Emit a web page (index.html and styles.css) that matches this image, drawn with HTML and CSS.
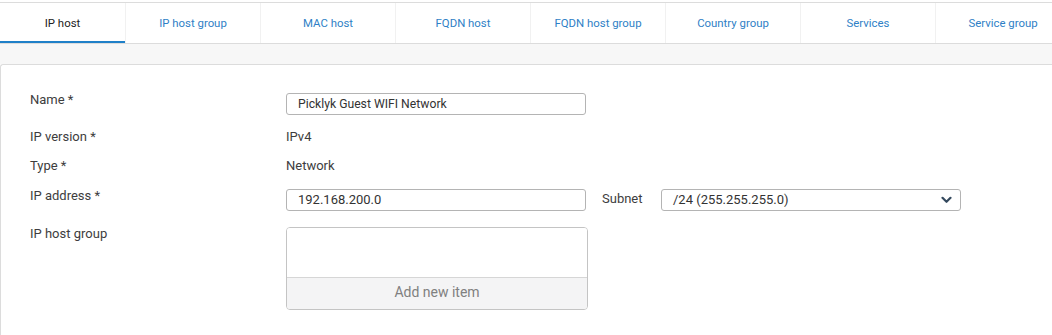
FILE: index.html
```html
<!DOCTYPE html>
<html>
<head>
<meta charset="utf-8">
<link rel="stylesheet" href="styles.css">
</head>
<body>
<div class="tabbar">
  <div class="tab tab-first active">IP host</div>
  <div class="tab">IP host group</div>
  <div class="tab">MAC host</div>
  <div class="tab">FQDN host</div>
  <div class="tab">FQDN host group</div>
  <div class="tab">Country group</div>
  <div class="tab">Services</div>
  <div class="tab">Service group</div>
</div>
<div class="strip"></div>
<div class="panel">
  <div class="row row-name">
    <div class="label">Name *</div>
    <div class="input input-name">Picklyk Guest WIFI Network</div>
  </div>
  <div class="row row-text">
    <div class="label">IP version *</div>
    <div class="value">IPv4</div>
  </div>
  <div class="row row-text row-type">
    <div class="label">Type *</div>
    <div class="value">Network</div>
  </div>
  <div class="row row-ip">
    <div class="label">IP address *</div>
    <div class="input">192.168.200.0</div>
    <div class="sublabel">Subnet</div>
    <div class="select">
      <span>/24 (255.255.255.0)</span>
      <svg class="chev" width="11" height="8" viewBox="0 0 11 8"><path d="M1.5 1.8 L5.5 5.8 L9.5 1.8" fill="none" stroke="#34495e" stroke-width="2.2" stroke-linecap="round" stroke-linejoin="round"/></svg>
    </div>
  </div>
  <div class="row row-group">
    <div class="label">IP host group</div>
    <div class="listbox">
      <div class="list-area"></div>
      <div class="add-item">Add new item</div>
    </div>
  </div>
</div>
</body>
</html>
```
FILE: styles.css
```css
html, body {
  margin: 0;
  padding: 0;
  background: #ffffff;
  font-family: Roboto, "Liberation Sans", Arial, sans-serif;
  color: #333;
}
body {
  padding-top: 2px;
  width: 1052px;
  height: 333px;
  overflow: hidden;
}
.tabbar {
  display: flex;
  border-top: 1px solid #dcdcdc;
  border-bottom: 1px solid #dcdcdc;
  height: 40px;
  background: #fff;
}
.tab {
  width: 135px;
  flex: none;
  box-sizing: border-box;
  border-left: 1px solid #f1f1f1;
  display: flex;
  align-items: center;
  justify-content: center;
  font-size: 11.4px;
  color: #2f7fc6;
}
.tab-first {
  width: 125px;
  border-left: none;
}
.tab.active {
  color: #222;
  border-bottom: 2px solid #1f80c8;
  padding-top: 2px;
}
.strip {
  height: 20px;
  background: #f7f7f7;
}
.panel {
  box-sizing: border-box;
  border-top: 1px solid #dcdcdc;
  border-left: 1px solid #dcdcdc;
  border-top-left-radius: 3px;
  background: #fff;
  padding: 28px 0 0 29px;
  height: 271px;
}
.row {
  display: flex;
  align-items: flex-start;
}
.label {
  width: 256px;
  flex: none;
  font-size: 13px;
  line-height: 16px;
  color: #3d3d3d;
  margin-top: -1px;
}
.value {
  font-size: 13px;
  line-height: 16px;
  color: #3d3d3d;
  margin-top: -1px;
}
.row-name { margin-bottom: 15px; }
.row-text { height: 16px; margin-bottom: 13px; }
.row-type { margin-bottom: 14px; }
.row-ip { margin-bottom: 16px; }
.row-ip .label { margin-top: -1px; }
.input, .select {
  box-sizing: border-box;
  width: 300px;
  height: 22px;
  border: 1px solid #b4b4b4;
  border-radius: 3px;
  font-size: 13px;
  line-height: 20px;
  padding: 0 11px;
  color: #333;
  background: #fff;
}
.input-name {
  font-size: 12.2px;
}
.sublabel {
  font-size: 13px;
  line-height: 16px;
  color: #3d3d3d;
  margin: 2px 0 0 16px;
  width: 59px;
}
.select {
  display: flex;
  align-items: center;
  justify-content: space-between;
  padding: 0 8px 0 11px;
}
.chev { display: block; }
.listbox {
  box-sizing: border-box;
  width: 302px;
  height: 83px;
  border: 1px solid #c4c4c4;
  border-radius: 4px;
  overflow: hidden;
  display: flex;
  flex-direction: column;
}
.list-area {
  flex: 1;
  background: #fff;
  border-bottom: 1px solid #d6d6d6;
}
.add-item {
  box-sizing: border-box;
  height: 31px;
  padding-bottom: 3px;
  background: #f4f4f5;
  color: #808080;
  font-size: 14px;
  display: flex;
  align-items: center;
  justify-content: center;
}
```
